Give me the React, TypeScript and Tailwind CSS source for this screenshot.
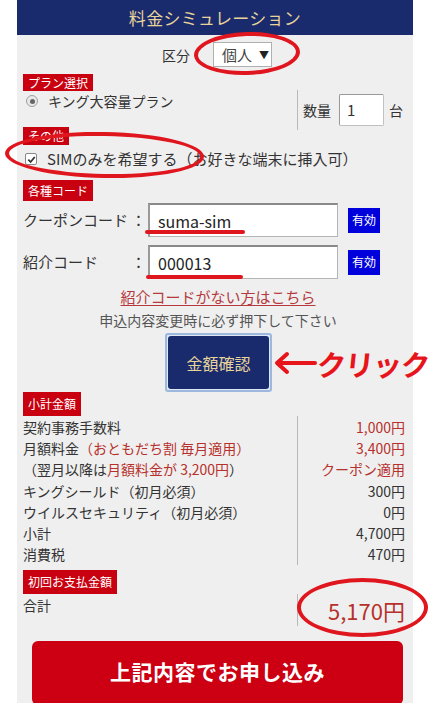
import React from "react";

const Tag = ({ children, h }: { children: React.ReactNode; h: string }) => (
  <div className={`w-fit bg-[#c8000f] text-white text-[12px] px-[5px] ${h}`}>{children}</div>
);

const CodeRow = ({ label, value, mt }: { label: string; value: string; mt: string }) => (
  <div className={`flex items-center h-[34px] ${mt}`}>
    <div className="w-[125px] flex justify-between pr-[2px] text-[15px] leading-[20px] text-[#333]">
      <span>{label}</span>
      <span>：</span>
    </div>
    <div className="w-[190px] h-[34px] bg-white border border-[#b5b5b5] border-t-2 border-t-[#8a8a8a] border-l-2 border-l-[#999] flex items-center pl-[8px] text-[16px] leading-[20px] text-[#222]">
      {value}
    </div>
    <div className="ml-[10px] w-[32px] h-[25px] bg-[#0000dd] text-white text-[12px] leading-[16px] flex items-center justify-center">
      有効
    </div>
  </div>
);

const rows = [
  { left: <>契約事務手数料</>, right: "1,000円", red: true },
  {
    left: (
      <>
        月額料金<span className="text-[#b7312c]">（おともだち割 毎月適用）</span>
      </>
    ),
    right: "3,400円",
    red: true,
  },
  {
    left: (
      <>
        （翌月以降は<span className="text-[#b7312c]">月額料金が 3,200円</span>）
      </>
    ),
    right: "クーポン適用",
    red: true,
  },
  { left: <>キングシールド（初月必須）</>, right: "300円", red: false },
  { left: <>ウイルスセキュリティ（初月必須）</>, right: "0円", red: false },
  { left: <>小計</>, right: "4,700円", red: false },
  { left: <>消費税</>, right: "470円", red: false },
];

export default function App() {
  return (
    <div className="relative w-[432px] h-[703px] overflow-hidden bg-white font-['Noto_Sans_CJK_JP','Noto_Sans',sans-serif] text-[#333] leading-[18px]">
      <div className="ml-[17px] w-[396px] h-full bg-[#efefef]">
        <div className="h-[35px] bg-[#1a2b6d] flex items-center justify-center text-[#e8d49a] text-[17px] tracking-[0.3px]">
          料金シミュレーション
        </div>

        <div className="px-[6px]">
          {/* 区分 */}
          <div className="h-[39px] flex items-center justify-center gap-[23px] pl-[4px]">
            <span className="text-[14px]">区分</span>
            <div className="w-[59px] h-[25px] bg-white border border-[#b0b0b0] flex items-center pl-[8px] gap-[7px] text-[15px] text-[#444]">
              個人<span className="text-[10px] text-[#222]">▼</span>
            </div>
          </div>

          <Tag h="leading-[17px]">プラン選択</Tag>
          <div className="flex h-[36px]">
            <div className="w-[274px] flex items-start pt-[1px]">
              <div className="flex items-center h-[18px]">
                <div className="ml-[3px] w-[12px] h-[12px] rounded-full border border-[#a0a0a0] bg-[#e8e8e8] flex items-center justify-center">
                  <div className="w-[5px] h-[5px] rounded-full bg-[#666]" />
                </div>
                <span className="ml-[10px] text-[14px] leading-[18px]">キング大容量プラン</span>
              </div>
            </div>
            <div className="h-[40px] -mt-[1px] border-l border-[#b8b8b8] flex items-center pl-[5px]">
              <span className="text-[14px]">数量</span>
              <div className="ml-[8px] w-[45px] h-[32px] bg-white border border-[#c0c0c0] border-t-[#999] border-l-[#999] rounded-[2px] flex items-center pl-[7px] text-[15px]">
                1
              </div>
              <span className="ml-[5px] text-[14px]">台</span>
            </div>
          </div>

          <Tag h="leading-[18px]">その他</Tag>
          <div className="mt-[3px] h-[22px] flex items-center">
            <div className="ml-[2px] w-[12px] h-[12px] bg-white border border-[#888] rounded-[2px] flex items-center justify-center">
              <svg width="9" height="9" viewBox="0 0 10 10">
                <path d="M1.5 5.2 L4 7.8 L8.6 2.2" fill="none" stroke="#333" strokeWidth="2" />
              </svg>
            </div>
            <span className="ml-[10px] text-[15px] leading-[22px]">SIMのみを希望する（お好きな端末に挿入可）</span>
          </div>

          <div className="mt-[10px]">
            <Tag h="leading-[21px]">各種コード</Tag>
          </div>
          <CodeRow label="クーポンコード" value="suma-sim" mt="mt-[2px]" />
          <CodeRow label="紹介コード" value="000013" mt="mt-[8px]" />

          <div className="mt-[9px] h-[18px] leading-[18px] text-center text-[15px] text-[#b5393d] underline underline-offset-2 pl-[6px]">
            紹介コードがない方はこちら
          </div>
          <div className="mt-[5px] h-[18px] leading-[18px] text-center text-[14px] text-[#555] pl-[6px]">
            申込内容変更時に必ず押下して下さい
          </div>

          <div className="mt-[4px] flex justify-center pl-[7px]">
            <div className="w-[107px] h-[59px] border-2 border-[#9db8de] rounded-[3px] p-[1px] bg-[#dfe8f3]">
              <div className="w-full h-full bg-[#1a2b6d] rounded-[3px] flex items-center justify-center text-[#e8d49a] text-[16px]">
                金額確認
              </div>
            </div>
          </div>

          <Tag h="leading-[24px]">小計金額</Tag>
          <div className="text-[14px]">
            {rows.map((r, i) => (
              <div key={i} className="flex h-[21.3px] items-center">
                <div className="w-[274px] whitespace-nowrap">{r.left}</div>
                <div
                  className={`flex-1 h-full border-l border-[#b8b8b8] flex items-center justify-end pr-[2px] ${
                    r.red ? "text-[#b7312c]" : "text-[#333]"
                  }`}
                >
                  {r.right}
                </div>
              </div>
            ))}
          </div>

          <div className="mt-[5px]">
            <Tag h="leading-[24px]">初回お支払金額</Tag>
          </div>
          <div className="flex h-[32px]">
            <div className="w-[274px] text-[14px] leading-[22px]">合計</div>
            <div className="flex-1 border-l border-[#b8b8b8] flex items-center justify-end pr-[2px] text-[22px] leading-[26px] text-[#b7312c]">
              5,170円
            </div>
          </div>

          <div className="mt-[15px] ml-[9px] w-[371px] h-[64px] bg-[#cc0012] rounded-[6px] flex items-start justify-center pt-[16px] text-white text-[21px] leading-[28px] font-bold tracking-[0.5px]">
            上記内容でお申し込み
          </div>
        </div>
      </div>

      {/* hand-drawn annotations */}
      <div className="absolute left-[194px] top-[32px] w-[106px] h-[43px] rounded-[50%] border-[4px] border-[#e0161e] -rotate-2" />
      <div className="absolute left-[5px] top-[132px] w-[199px] h-[46px] rounded-[50%] border-[4px] border-[#e0161e] rotate-1" />
      <div className="absolute left-[297px] top-[578px] w-[131px] h-[59px] rounded-[50%] border-[4px] border-[#e0161e]" />
      <div className="absolute left-[145px] top-[230px] w-[100px] h-[4px] rounded-full bg-[#e0161e]" />
      <div className="absolute left-[146px] top-[275px] w-[97px] h-[4px] rounded-full bg-[#e0161e]" />
      <div className="absolute left-[273px] top-[346px] flex items-center text-[#e8141b]">
        <svg width="44" height="26" viewBox="0 0 44 26">
          <path d="M42 13 H5 M14 4 L4 13 L14 22" fill="none" stroke="#e8141b" strokeWidth="4" strokeLinecap="round" strokeLinejoin="round" />
        </svg>
        <span className="text-[29px] font-bold leading-[34px] -skew-x-6 tracking-[-1px]">クリック</span>
      </div>
    </div>
  );
}
